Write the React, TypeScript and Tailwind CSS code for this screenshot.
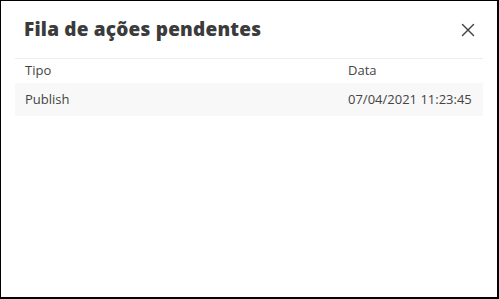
import { X } from 'lucide-react';

const rows = [{ tipo: 'Publish', data: '07/04/2021 11:23:45' }];

export default function App() {
  return (
    <div
      className="w-[499px] h-[299px] bg-white border-t border-l border-r-2 border-b-2 border-black flex flex-col"
      style={{ fontFamily: '"Open Sans", "Liberation Sans", sans-serif' }}
    >
      <div className="flex items-center justify-between pl-[23px] pr-[18px] h-[57px]">
        <h2 className="text-[19px] font-extrabold text-[#3b3b3b] tracking-[0.2px]">Fila de ações pendentes</h2>
        <button className="text-[#444]">
          <X className="w-[22px] h-[22px]" strokeWidth={1.5} />
        </button>
      </div>

      <div className="mx-[14px] border-t border-[#ececec]">
        <div className="flex items-center h-[24px] px-[10px] text-[13px] text-[#444]">
          <span className="w-[323px]">Tipo</span>
          <span>Data</span>
        </div>
        {rows.map(r => (
          <div key={r.data} className="flex items-center h-[33px] px-[10px] bg-[#f8f8f8] text-[13px] text-[#444]">
            <span className="w-[323px]">{r.tipo}</span>
            <span>{r.data}</span>
          </div>
        ))}
      </div>
    </div>
  );
}
